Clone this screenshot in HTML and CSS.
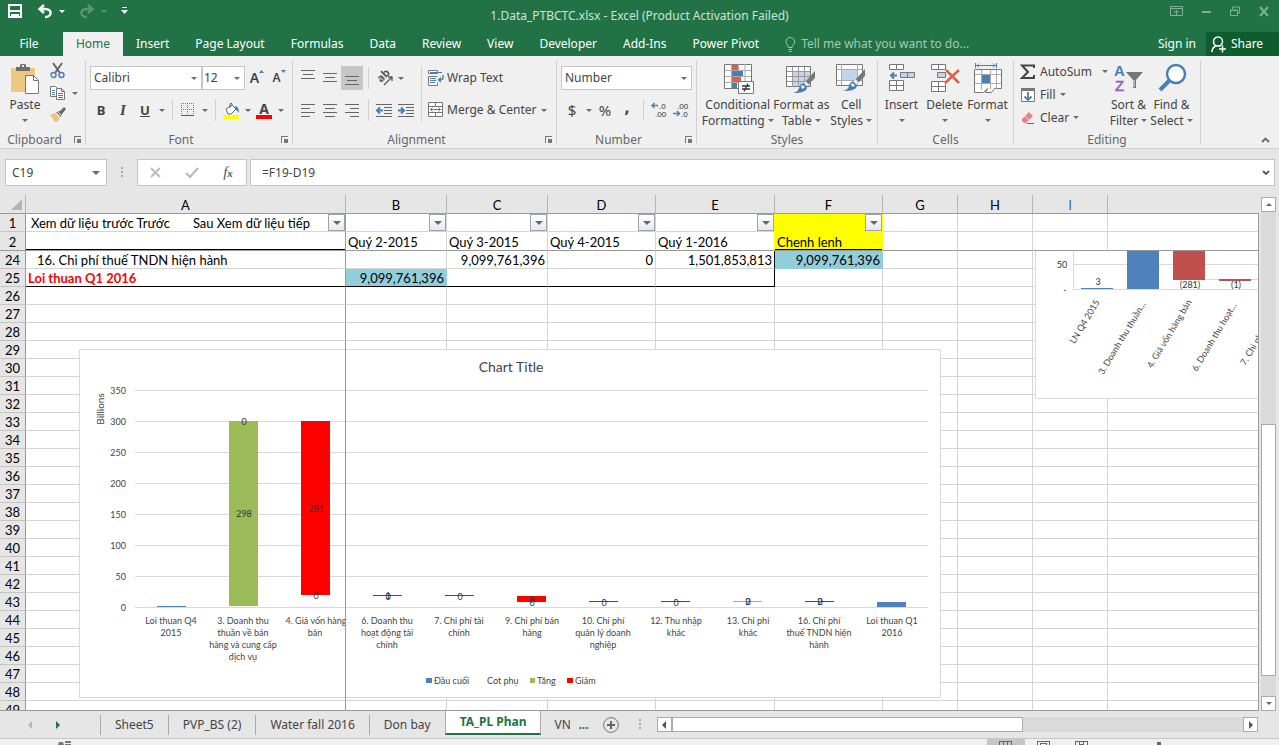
FILE: index.html
```html
<!DOCTYPE html>
<html lang="vi">
<head>
	<meta charset="utf-8">
	<title>1.Data_PTBCTC.xlsx - Excel</title>
	<link rel="stylesheet" href="styles.css">
</head>
<body>
	<header class="titlebar">
		<div class="quick">
			<button title="Save"><svg width="16" height="16" viewBox="0 0 16 16"><path d="M2 2h12v12H2z" fill="none" stroke="#fff" stroke-width="2"/><path d="M2 7h12v2H2zM4 11h8v4H9v-2H7v2H4z" fill="#fff"/></svg></button>
			<button title="Undo" class="undo"><svg width="16" height="14" viewBox="0 0 16 14"><path d="M7 1L2.500 5 7 9M2 5h6c8 0 7 8 0 8" fill="none" stroke="#fff" stroke-width="2.400"/></svg><i class="arr"></i></button>
			<button title="Redo" class="undo faded"><svg width="16" height="14" viewBox="0 0 16 14"><path d="M9 1l4.500 4L9 9M14 5H8C0 5 1 13 8 13" fill="none" stroke="#fff" stroke-width="2.400"/></svg><i class="arr"></i></button>
			<button title="Customize"><svg width="7" height="8" viewBox="0 0 7 8"><path d="M1 0h5v1H1zM0 3h7L3.500 7z" fill="#fff"/></svg></button>
		</div>
		<h1>1.Data_PTBCTC.xlsx - Excel (Product Activation Failed)</h1>
		<div class="winbtns">
			<button title="Ribbon options"><svg width="14" height="11" viewBox="0 0 14 11"><path d="M.5.5h12v9H.5zM1 2.500h12M6.500 9V4.500M4 6.500l2.500-2 2.500 2" fill="none" stroke="#7fb094"/></svg></button>
			<button title="Minimize"><svg width="10" height="10" viewBox="0 0 10 10"><path d="M0 5h9v2H0z" fill="#7fb094"/></svg></button>
			<button title="Restore"><svg width="11" height="11" viewBox="0 0 11 11"><path d="M2.500 3V1h7v6h-2M.5 4h7v5.500h-7zM.5 4.500h7" fill="none" stroke="#7fb094"/></svg></button>
			<button title="Close"><svg width="11" height="11" viewBox="0 0 11 11"><path d="M1 1l8 9M9 1l-8 9" stroke="#7fb094" stroke-width="2"/></svg></button>
		</div>
	</header>

	<nav class="tabs">
		<button class="file">File</button>
		<button class="active">Home</button>
		<button>Insert</button>
		<button>Page Layout</button>
		<button>Formulas</button>
		<button>Data</button>
		<button>Review</button>
		<button>View</button>
		<button>Developer</button>
		<button>Add-Ins</button>
		<button>Power Pivot</button>
		<button class="tell"><svg width="11" height="15" viewBox="0 0 11 15"><path d="M3.500 10.500C3.500 8 1 7.500 1 4.800a4.300 4.300 0 0 1 8.600 0C9.600 7.500 7 8 7 10.500zM3.500 12.500H7M4 14.500h2.500" fill="none" stroke="#a4c9b3"/></svg>Tell me what you want to do...</button>
		<button class="signin">Sign in</button>
		<button class="share"><svg width="16" height="17" viewBox="0 0 16 17"><circle cx="7" cy="5.500" r="4.500" fill="none" stroke="#fff" stroke-width="1.500"/><path d="M1 16c0-3 2-5.500 4.500-6.500M8.500 9.500l1 .8M8 13h7M11.500 9.500v7" fill="none" stroke="#fff" stroke-width="1.500"/></svg>Share</button>
	</nav>

	<section class="ribbon">
		<div class="group clipboard">
			<div class="body">
				<button class="big"><svg width="30" height="32" viewBox="0 0 30 32"><path d="M1 5h24v24H1z" fill="#ecc883"/><path d="M6 4h4V2l1-1h4l1 1v2h4v4H6z" fill="#6e6e6e"/><path d="M12 2h2v2h-2z" fill="#f0f0f0"/><path d="M15.500 12.500h8l5 5v13h-13z" fill="#fff" stroke="#777"/><path d="M23.500 12.500v5h5" fill="none" stroke="#777"/></svg><span>Paste</span><i class="arr"></i></button>
				<div class="stack">
					<button title="Cut"><svg width="16" height="16" viewBox="0 0 16 16"><path d="M3 0l7 10M12 0L5 10" stroke="#666" stroke-width="2"/><circle cx="3.500" cy="12" r="2.500" fill="none" stroke="#4a7fb5" stroke-width="1.400"/><circle cx="11.500" cy="12" r="2.500" fill="none" stroke="#4a7fb5" stroke-width="1.400"/></svg></button>
					<button title="Copy"><svg width="16" height="16" viewBox="0 0 16 16"><path d="M.5 1.500h5l3 3v7h-8z" fill="#fff" stroke="#777"/><path d="M2 5.500h3M2 7.500h3M2 9.500h3" stroke="#4a7fb5"/><path d="M6.500 3.500h5l3 3v8h-8z" fill="#fff" stroke="#777"/><path d="M11.500 3.500v3h3" fill="none" stroke="#777"/><path d="M8 8.500h5M8 10.500h5M8 12.500h5" stroke="#4a7fb5"/></svg><i class="arr"></i></button>
					<button title="Format Painter"><svg width="16" height="16" viewBox="0 0 16 16"><path d="M0 8l5-2 5 5-3 4H5z" fill="#ecc27e"/><path d="M6 5l5 5 1-3 4-5-2-2-4 4z" fill="#666"/><path d="M7 4l6 6" stroke="#f0f0f0"/></svg></button>
				</div>
			</div>
			<div class="label">Clipboard<i class="launch"></i></div>
		</div>

		<div class="group font">
			<div class="body rows">
				<div class="row">
					<span class="combo wide"><select aria-label="Font"><option>Calibri</option></select></span><span class="combo narrow"><select aria-label="Font size"><option>12</option></select></span>
					<button class="ib grow" title="Increase font size">A<svg width="5" height="4" viewBox="0 0 5 4"><path d="M0 3h5L2.500 0z" fill="#4a7fb5"/></svg></button>
					<button class="ib shrink" title="Decrease font size">A<svg width="5" height="4" viewBox="0 0 5 4"><path d="M0 0h5L2.500 3z" fill="#4a7fb5"/></svg></button>
				</div>
				<div class="row">
					<button class="ib bold">B</button>
					<button class="ib italic">I</button>
					<button class="ib under">U</button>
					<button class="drop" title="Underline"><i class="arr"></i></button>
					<i class="sep"></i>
					<button class="ib" title="Borders"><svg width="14" height="14" viewBox="0 0 14 14"><path d="M.5 0v13M12.500 0v13M0 .5h13M6.500 0v13M0 6.500h13" stroke="#777" stroke-dasharray="1 1"/><path d="M0 12.500h13" stroke="#555"/></svg></button>
					<button class="drop" title="Border styles"><i class="arr"></i></button>
					<i class="sep"></i>
					<button class="ib" title="Fill"><svg width="17" height="17" viewBox="0 0 17 17"><path d="M3 7l6-4 4 4-5 5H5z" fill="#fff" stroke="#666"/><path d="M7 6V2q1-2 2 0v2" fill="none" stroke="#666"/><path d="M12 4q4 0 4 7-2-3-3-3z" fill="#4a7fb5"/><path d="M0 13h16v4H0z" fill="#ff0"/></svg></button>
					<button class="drop" title="Fill colours"><i class="arr"></i></button>
					<button class="ib fontcolor" title="Font color">A</button>
					<button class="drop" title="Font colours"><i class="arr"></i></button>
				</div>
			</div>
			<div class="label">Font<i class="launch"></i></div>
		</div>

		<div class="group alignment">
			<div class="body">
				<div class="rows">
					<div class="row">
						<button class="ib" title="Top Align"><svg width="14" height="16" viewBox="0 0 14 16"><path d="M0 .5h14M2 4.500h10M0 8.500h14" stroke="#666"/></svg></button>
						<button class="ib" title="Middle Align"><svg width="14" height="14" viewBox="0 0 14 14"><path d="M0 2.500h14M2 6.500h10M0 10.500h14" stroke="#666"/></svg></button>
						<button class="ib on" title="Bottom Align"><svg width="14" height="14" viewBox="0 0 14 14"><path d="M0 5.500h14M2 9.500h10M0 13.500h14" stroke="#666"/></svg></button>
						<i class="sep"></i>
						<button class="ib" title="Orientation"><svg width="17" height="16" viewBox="0 0 17 16"><text x="0" y="0" transform="translate(5 13) rotate(-45)" font-size="11" font-weight="bold" fill="#555">ab</text><path d="M8 15l8-8M12 7h4v4" fill="none" stroke="#555" stroke-width="1.300"/></svg></button>
						<button class="drop" title="Orientation options"><i class="arr"></i></button>
					</div>
					<div class="row">
						<button class="ib" title="Left"><svg width="14" height="14" viewBox="0 0 14 14"><path d="M0 1.500h14M0 5.500h9M0 9.500h14M0 13.500h9" stroke="#666"/></svg></button>
						<button class="ib" title="Center"><svg width="14" height="14" viewBox="0 0 14 14"><path d="M0 1.500h14M2 5.500h10M0 9.500h14M2 13.500h10" stroke="#666"/></svg></button>
						<button class="ib" title="Right"><svg width="14" height="14" viewBox="0 0 14 14"><path d="M0 1.500h14M5 5.500h9M0 9.500h14M5 13.500h9" stroke="#666"/></svg></button>
						<i class="sep"></i>
						<button class="ib" title="Decrease Indent"><svg width="16" height="13" viewBox="0 0 16 13"><path d="M0 .5h16M8 3.500h8M8 6.500h8M8 9.500h8M0 12.500h16" stroke="#666"/><path d="M7 6.500H1M4 3.500l-3 3 3 3" fill="none" stroke="#4a7fb5" stroke-width="2"/></svg></button>
						<button class="ib" title="Increase Indent"><svg width="16" height="13" viewBox="0 0 16 13"><path d="M0 .5h16M8 3.500h8M8 6.500h8M8 9.500h8M0 12.500h16" stroke="#666"/><path d="M0 6.500h6M3 3.500l3 3-3 3" fill="none" stroke="#4a7fb5" stroke-width="2"/></svg></button>
					</div>
				</div>
				<i class="sep tall"></i>
				<div class="rows">
					<button class="tb"><svg width="16" height="16" viewBox="0 0 16 16"><path d="M.5.5h9v3h-9zM9.500 6.500h-9v9h9v-3" fill="#fff" stroke="#777"/><path d="M2 2.500h12M2 8.500h6M2 10.500h6M2 12.500h5" stroke="#4a7fb5"/><path d="M15 5v3q0 2-4 2M13 7.500l-2.500 2.500 2.500 2" fill="none" stroke="#4a7fb5" stroke-width="1.400"/></svg>Wrap Text</button>
					<button class="tb"><svg width="16" height="16" viewBox="0 0 16 16"><path d="M.5.5h14v14H.5zM0 4.500h15M0 10.500h15M7.500 0v4M7.500 11v4" fill="#fff" stroke="#777"/><path d="M2 7.500h11M4.500 5.500l-2 2 2 2M10.500 5.500l2 2-2 2" fill="none" stroke="#4a7fb5"/></svg>Merge &amp; Center<i class="arr far"></i></button>
				</div>
			</div>
			<div class="label">Alignment<i class="launch"></i></div>
		</div>

		<div class="group number">
			<div class="body rows">
				<div class="row"><span class="combo full"><select aria-label="Number format"><option>Number</option></select></span></div>
				<div class="row">
					<button class="ib sym">$</button>
					<button class="drop" title="Currency"><i class="arr"></i></button>
					<button class="ib sym">%</button>
					<button class="ib sym heavy">,</button>
					<i class="sep"></i>
					<button class="ib" title="Increase Decimal"><svg class="dec" width="16" height="16" viewBox="0 0 16 16"><path d="M7 3.500H1M3.500 1L1 3.500 3.500 6" fill="none" stroke="#4a7fb5" stroke-width="1.400"/><text x="8" y="7">.0</text><text x="4" y="15">.00</text></svg></button>
					<button class="ib" title="Decrease Decimal"><svg class="dec" width="16" height="16" viewBox="0 0 16 16"><path d="M0 11.500h6M4 9l2.500 2.500L4 14" fill="none" stroke="#4a7fb5" stroke-width="1.400"/><text x="4" y="7">.00</text><text x="8" y="15">.0</text></svg></button>
				</div>
			</div>
			<div class="label">Number<i class="launch"></i></div>
		</div>

		<div class="group styles">
			<div class="body">
				<button class="big w1"><svg width="32" height="32" viewBox="0 0 32 32"><path d="M2.500 1.500h27v24h-27z" fill="#fff" stroke="#777"/><path d="M9.500 1v24M16.500 1v24M23 1v24M3 7.500h26M3 13.500h26M3 19.500h26" stroke="#aaa"/><path d="M10 2h6v5h-6zM10 14h9v5h-9z" fill="#dd6144"/><path d="M10 8h11v5H10zM10 20h5v5h-5z" fill="#4a7fb5"/><path d="M16.500 18.500h15v12h-15z" fill="#fff" stroke="#777"/><path d="M20 23h8M20 26h8M26 20.500l-4 8" stroke="#333" stroke-width="1.300"/></svg><span>Conditional<br>Formatting<i class="arr"></i></span></button>
				<button class="big w2"><svg width="32" height="32" viewBox="0 0 32 32"><path d="M1.500 3.500h24v20h-24z" fill="#fff" stroke="#777"/><path d="M8 9h17v14H8z" fill="#c3d5ea"/><path d="M7.500 4v20M13.500 4v20M19.500 4v20M2 8.500h23M2 13.500h23M2 18.500h23" stroke="#999"/><path d="M30 8v7l-7 7-3-3z" fill="#777"/><path d="M20 19l3 3" stroke="#f0f0f0" stroke-width="2"/><path d="M18 20l4 4q0 6-14 6 5-1 6-5 1-4 4-5z" fill="#4a7fb5"/><path d="M17 22l3 2-2 2-2-2z" fill="#fff"/></svg><span>Format as<br>Table<i class="arr"></i></span></button>
				<button class="big w3"><svg width="32" height="32" viewBox="0 0 32 32"><path d="M1.500 1.500h26v21h-26z" fill="#fff" stroke="#777"/><path d="M6.500 1v21M22.500 1v21M2 6.500h25M2 17.500h25" stroke="#aaa"/><path d="M7 7h15v10H7z" fill="#c3d5ea"/><path d="M30 6v7l-7 7-3-3z" fill="#777"/><path d="M20 17l3 3" stroke="#f0f0f0" stroke-width="2"/><path d="M18 18l4 4q0 6-14 6 5-1 6-5 1-4 4-5z" fill="#4a7fb5"/><path d="M17 20l3 2-2 2-2-2z" fill="#fff"/></svg><span>Cell<br>Styles<i class="arr"></i></span></button>
			</div>
			<div class="label">Styles</div>
		</div>

		<div class="group cells">
			<div class="body">
				<button class="big"><svg width="32" height="32" viewBox="0 0 32 32"><path d="M3.500 1.500h14v5h-14zM10.500 1v6M3.500 17.500h14v10h-14zM10.500 17v11M3 22.500h15" fill="#fff" stroke="#777"/><path d="M14.500 9.500h14v5h-14z" fill="#c3d5ea" stroke="#777"/><path d="M21.500 9v6" stroke="#777"/><path d="M11 12.500H5M8 9.500l-3 3 3 3" fill="none" stroke="#4a7fb5" stroke-width="2"/></svg><span>Insert</span><i class="arr"></i></button>
				<button class="big"><svg width="32" height="32" viewBox="0 0 32 32"><path d="M2.500 1.500h14v5h-14zM9.500 1v6M2.500 18.500h14v10h-14zM9.500 18v11M2 23.500h15" fill="#fff" stroke="#777"/><path d="M8.500 9.500h8v5h-8z" fill="#c3d5ea" stroke="#777"/><path d="M17 7l13 13M30 7L16 20" stroke="#dd6144" stroke-width="2.500"/></svg><span>Delete</span><i class="arr"></i></button>
				<button class="big"><svg width="32" height="32" viewBox="0 0 32 32"><path d="M2.500 6.500h27v19h-7l-3 4h-6l2-4-4 4h-9z" fill="#fff" stroke="#777"/><path d="M9.500 7v20M18.500 7v19M24.500 7v19M3 11.500h26M3 20.500h26" stroke="#aaa"/><path d="M10 12h8v8h-8z" fill="#4a7fb5"/><path d="M3.500 0v5M24.500 0v5M4 2.500h20M7 .5l-2 2 2 2M21 .5l2 2-2 2" fill="none" stroke="#4a7fb5"/></svg><span>Format</span><i class="arr"></i></button>
			</div>
			<div class="label">Cells</div>
		</div>

		<div class="group editing">
			<div class="body">
				<div class="list">
					<button class="tb"><svg width="16" height="16" viewBox="0 0 16 16"><path d="M14 4V1.500H2L8 8l-6 6h12v-3" fill="none" stroke="#444" stroke-width="2"/></svg>AutoSum<i class="arr far"></i></button>
					<button class="tb"><svg width="16" height="16" viewBox="0 0 16 16"><path d="M1.500 1.500h13v13h-13z" fill="#fff" stroke="#777"/><path d="M1 1h14v3H1z" fill="#777"/><path d="M8 5v8M4.500 9.500L8 13l3.500-3.500" fill="none" stroke="#4a7fb5" stroke-width="1.800"/></svg>Fill<i class="arr"></i></button>
					<button class="tb"><svg width="16" height="16" viewBox="0 0 16 16"><path d="M2 9l7-7 4 4-7 7H4l-2-2z" fill="#e8808f"/><path d="M5 6l4 4" stroke="#f0f0f0"/><path d="M7 13.500h7" stroke="#666"/></svg>Clear<i class="arr"></i></button>
				</div>
				<button class="big"><svg class="az" width="32" height="32" viewBox="0 0 32 32"><text x="1" y="13" font-weight="bold" fill="#4a7fb5">A</text><text x="2" y="28" fill="#9660b8" stroke="#9660b8" stroke-width=".6">Z</text><path d="M13 9h17l-7 8v8h-3v-8z" fill="#777"/><path d="M21 17v7" stroke="#f0f0f0"/></svg><span>Sort &amp;<br>Filter<i class="arr"></i></span></button>
				<button class="big"><svg width="32" height="32" viewBox="0 0 32 32"><circle cx="20" cy="11" r="9" fill="#fff" stroke="#4a7fb5" stroke-width="2.500"/><path d="M13 18L4 27" stroke="#4a7fb5" stroke-width="4"/></svg><span>Find &amp;<br>Select<i class="arr"></i></span></button>
			</div>
			<div class="label">Editing</div>
		</div>
		<button class="collapse" title="Collapse"><svg width="9" height="6" viewBox="0 0 9 6"><path d="M1 5l3.500-3.500L8 5" fill="none" stroke="#666" stroke-width="1.800"/></svg></button>
	</section>

	<section class="formulabar">
		<div class="namebox"><input type="text" value="C19" aria-label="Name box"><i class="arr"></i></div>
		<i class="dots"></i>
		<div class="fxbtns">
			<button title="Cancel"><svg width="12" height="12" viewBox="0 0 12 12"><path d="M1 1l9 9M10 1l-9 9" stroke="#bbb" stroke-width="1.800"/></svg></button>
			<button title="Enter"><svg width="14" height="12" viewBox="0 0 14 12"><path d="M1 6l4 4 8-9" fill="none" stroke="#bbb" stroke-width="2.200"/></svg></button>
			<button class="fx"><i>f</i><small>x</small></button>
		</div>
		<div class="formula"><input type="text" value="=F19-D19" aria-label="Formula"><svg width="8" height="6" viewBox="0 0 8 6"><path d="M1 1l3 3 3-3" fill="none" stroke="#555" stroke-width="1.800"/></svg></div>
	</section>

	<main class="sheet">
		<div class="grid">
			<table>
				<colgroup><col class="c0"><col class="ca"><col class="cb"><col class="cb"><col class="cd"><col class="ce"><col class="cd"><col class="cg"><col class="cg"><col class="cg"><col></colgroup>
				<thead>
					<tr><th class="corner"><svg width="11" height="11" viewBox="0 0 11 11"><path d="M11 0v11H0z" fill="#b4b4b4"/></svg></th><th>A</th><th>B</th><th>C</th><th>D</th><th>E</th><th>F</th><th>G</th><th>H</th><th class="blue">I</th><th></th></tr>
				</thead>
				<tbody id="rows">
					<tr><th>1</th><td class="nav"><span>Xem dữ liệu trước Trước</span><span>Sau Xem dữ liệu tiếp</span><button class="filter" title="Filter"></button></td><td><button class="filter" title="Filter"></button></td><td><button class="filter" title="Filter"></button></td><td><button class="filter" title="Filter"></button></td><td class="edge"><button class="filter" title="Filter"></button></td><td class="yellow"><button class="filter" title="Filter"></button></td><td></td><td></td><td></td><td></td></tr>
					<tr class="frozen"><th>2</th><td class="line"></td><td>Quý 2-2015</td><td>Quý 3-2015</td><td>Quý 4-2015</td><td class="edge">Quý 1-2016</td><td class="yellow line">Chenh lenh</td><td></td><td></td><td></td><td></td></tr>
					<tr><th>24</th><td class="indent">16. Chi phí thuế TNDN hiện hành</td><td></td><td class="num">9,099,761,396</td><td class="num">0</td><td class="num box">1,501,853,813</td><td class="num teal">9,099,761,396</td><td></td><td></td><td></td><td></td></tr>
					<tr class="total"><th>25</th><td class="red">Loi thuan Q1 2016</td><td class="num teal">9,099,761,396</td><td></td><td></td><td class="box"></td><td></td><td></td><td></td><td></td><td></td></tr>
				</tbody>
			</table>

			<svg class="chart main-chart" width="862" height="349" viewBox="0 0 862 349">
				<rect x=".5" y=".5" width="861" height="348" fill="#fff" stroke="#d9d9d9"/>
				<text class="title" x="432" y="23">Chart Title</text>
				<path d="M56 41.500h793M56 72.500h793M56 103.500h793M56 134.500h793M56 165.500h793M56 196.500h793M56 227.500h793M56 258.500h793" stroke="#d9d9d9"/>
				<g class="axis">
					<text x="47" y="45">350</text><text x="47" y="76">300</text><text x="47" y="107">250</text><text x="47" y="138">200</text><text x="47" y="169">150</text><text x="47" y="200">100</text><text x="47" y="231">50</text><text x="47" y="262">0</text>
				</g>
				<text class="unit" transform="translate(25 60) rotate(-90)">Billions</text>
				<g fill="#4f81bd"><rect x="78" y="257" width="29" height="1"/><rect x="798" y="253" width="29" height="5"/></g>
				<g fill="#9bbb59"><rect x="150" y="72" width="29" height="185"/><rect x="654" y="252" width="29" height="1"/></g>
				<g fill="#f00"><rect x="222" y="72" width="29" height="174"/><rect x="294" y="246" width="29" height="1"/><rect x="366" y="246" width="29" height="1"/><rect x="438" y="247" width="29" height="6"/><rect x="510" y="252" width="29" height="1"/><rect x="582" y="252" width="29" height="1"/><rect x="726" y="252" width="29" height="1"/></g>
				<g class="values">
					<text x="165" y="76">0</text><text x="165" y="168">298</text><text x="237" y="163">281</text><text x="237" y="250">0</text>
					<text x="309" y="251">0</text><text x="309" y="250">1</text><text x="381" y="251">0</text><text x="453" y="257">0</text><text x="453" y="254">9</text><text x="525" y="257">0</text><text x="597" y="257">0</text><text x="669" y="256">0</text><text x="669" y="256">2</text><text x="741" y="256">0</text><text x="741" y="256">2</text>
				</g>
				<g class="cats">
					<text x="92" y="275">Loi thuan Q4<tspan x="92" dy="12">2015</tspan></text>
					<text x="164" y="275">3. Doanh thu<tspan x="164" dy="12">thuần về bán</tspan><tspan x="164" dy="12">hàng và cung cấp</tspan><tspan x="164" dy="12">dịch vụ</tspan></text>
					<text x="237" y="275">4. Giá vốn hàng<tspan x="236" dy="12">bán</tspan></text>
					<text x="308" y="275">6. Doanh thu<tspan x="308" dy="12">hoạt động tài</tspan><tspan x="308" dy="12">chính</tspan></text>
					<text x="380" y="275">7. Chi phí tài<tspan x="380" dy="12">chính</tspan></text>
					<text x="453" y="275">9. Chi phí bán<tspan x="453" dy="12">hàng</tspan></text>
					<text x="524" y="275">10. Chi phí<tspan x="524" dy="12">quản lý doanh</tspan><tspan x="524" dy="12">nghiệp</tspan></text>
					<text x="597" y="275">12. Thu nhập<tspan x="597" dy="12">khác</tspan></text>
					<text x="669" y="275">13. Chi phí<tspan x="669" dy="12">khác</tspan></text>
					<text x="740" y="275">16. Chi phí<tspan x="740" dy="12">thuế TNDN hiện</tspan><tspan x="740" dy="12">hành</tspan></text>
					<text x="813" y="275">Loi thuan Q1<tspan x="813" dy="12">2016</tspan></text>
				</g>
				<path d="M347 329h6v5h-6z" fill="#4f81bd"/><path d="M451 329h5v5h-5z" fill="#9bbb59"/><path d="M488 329h6v5h-6z" fill="#f00"/>
				<g class="legend"><text x="355" y="335">Đầu cuối</text><text x="408" y="335">Cot phụ</text><text x="458" y="335">Tăng</text><text x="496" y="335">Giảm</text></g>
				<path d="M266.500 0v349" stroke="#999"/>
			</svg>

			<svg class="chart side-chart" width="223" height="148" viewBox="0 0 223 148">
				<path d="M0 0h223v148H0z" fill="#fff"/>
				<path d="M.5 0v147.500H223M38 13.500h185M38.500 0v38.500M38 38.500h185M170 28.500h14M215 28.500h8" fill="none" stroke="#d9d9d9"/>
				<path d="M46 37h32v1H46zM92 0h32v38H92z" fill="#4f81bd"/>
				<path d="M138 0h32v29h-32zM184 28h32v2h-32z" fill="#c0504d"/>
				<path d="M145 30h20v8h-20zM196 30h12v8h-12z" fill="#fff"/>
				<g class="values"><text x="27" y="17">50</text><text x="30" y="42">-</text><text x="63" y="34">3</text><text x="155" y="37">(281)</text><text x="201" y="37">(1)</text></g>
				<g class="slant">
					<text transform="translate(65 51) rotate(-59)">LN Q4 2015</text>
					<text transform="translate(111 53) rotate(-59)">3. Doanh thu thuần...</text>
					<text transform="translate(157 51) rotate(-59)">4. Giá vốn hàng bán</text>
					<text transform="translate(202 54) rotate(-59)">6. Doanh thu hoạt...</text>
					<text transform="translate(248 52) rotate(-59)">7. Chi phí tài chính</text>
				</g>
			</svg>
		</div>
		<div class="vscroll">
			<button class="sbtn" title="Up"><i class="arr up"></i></button>
			<div class="track"><div class="before"></div><div class="thumb"></div><div class="after"></div></div>
			<button class="sbtn" title="Down"><i class="arr"></i></button>
		</div>
	</main>

	<footer class="sheettabs">
		<div class="arrows"><button title="Previous"><i class="arr left pale"></i></button><button title="Next"><i class="arr right green"></i></button></div>
		<button class="tab">Sheet5</button><button class="tab">PVP_BS (2)</button><button class="tab">Water fall 2016</button><button class="tab">Don bay</button><button class="tab current">TA_PL Phan</button><button class="tab cut">VN</button>
		<button class="more">...</button>
		<button class="add" title="New sheet"><svg width="16" height="16" viewBox="0 0 16 16"><circle cx="8" cy="8" r="7.400" fill="none" stroke="#777"/><path d="M8 4v8M4 8h8" stroke="#666" stroke-width="2"/></svg></button>
		<i class="dots"></i>
		<div class="hscroll">
			<button class="sbtn" title="Left"><i class="arr left"></i></button>
			<div class="thumb"></div>
			<div class="rest"></div>
			<button class="sbtn" title="Right"><i class="arr right"></i></button>
		</div>
	</footer>
	<div class="status">
		<svg width="14" height="4" viewBox="0 0 14 4"><path d="M1 1h4l1 3H0zM7 0h6v2H7zM7 3h6v1H7z" fill="#777"/></svg>
		<div class="views">
			<span class="on"><svg width="14" height="4" viewBox="0 0 14 4"><path d="M0 .5h13M.5 0v4M4.500 0v4M8.500 0v4M12.500 0v4" stroke="#666"/></svg></span>
			<span><svg width="14" height="4" viewBox="0 0 14 4"><path d="M0 .5h13M.5 0v4M12.500 0v4M3 2.500h7M3.500 2v2M9.500 2v2" stroke="#666"/></svg></span>
			<span><svg width="14" height="4" viewBox="0 0 14 4"><path d="M0 .5h13M.5 0v4M4.500 0v3M8.500 0v3M12.500 0v4M4 3.500h5" stroke="#666"/></svg></span>
			<i class="knob"></i>
		</div>
	</div>
	<script src="script.js"></script>
</body>
</html>
```

FILE: script.js
```js
// empty rows below the data
var rows = document.getElementById("rows");
for(var i = 26; i < 50; i++){
	var tr = document.createElement("tr");
	var th = document.createElement("th");
	th.textContent = i;
	tr.appendChild(th);
	for(var j = 0; j < 10; j++){
		tr.appendChild(document.createElement("td"));
	}
	rows.appendChild(tr);
}
```

FILE: styles.css
```css
*{margin:0; padding:0; box-sizing:border-box;}
body{
	display:flex;
	flex-direction:column;
	height:100vh;
	overflow:hidden;
	background:#e6e6e6;
	color:#444;
	font-family:"Noto Sans", "Open Sans", sans-serif;
	font-size:12px;
	line-height:16px;
}
button, input, select{
	border:0;
	background:none;
	color:inherit;
	font:inherit;
}
button{
	display:flex;
	align-items:center;
	justify-content:center;
}
svg{display:block; flex:none; overflow:visible;}

/* small triangles */
.arr{
	flex:none;
	width:0;
	height:0;
	border:3px solid transparent;
	border-top-color:#6b6b6b;
	border-bottom-width:0;
}
.arr.up{border-width:0 3px 3px; border-bottom-color:#6b6b6b;}
.arr.left{border-width:4px 4px 4px 0; border-color:transparent #555;}
.arr.right{border-width:4px 0 4px 4px; border-color:transparent #555;}
.arr.pale{border-color:transparent #b5b5b5;}
.arr.green{border-color:transparent #217346;}

/* title bar */
.titlebar{
	display:grid;
	flex:none;
	grid-template-columns:1fr auto 1fr;
	height:32px;
	background:#217346;
	color:#cfe2d7;
}
.titlebar h1{
	padding-top:8px;
	font-size:12px;
	font-weight:normal;
}
.quick{
	display:flex;
	align-items:center;
	gap:14px;
	height:22px;
	padding-left:7px;
}
.undo{gap:6px;}
.quick .arr{border-top-color:#fff;}
.faded{opacity:.25;}
.winbtns{
	display:flex;
	justify-content:flex-end;
	gap:18px;
	height:22px;
	padding-right:9px;
}

/* ribbon tabs */
.tabs{
	display:flex;
	flex:none;
	height:24px;
	background:#217346;
	color:#fff;
	white-space:nowrap;
}
.tabs button{padding:0 13px;}
.tabs .file{width:58px; margin-right:5px;}
.tabs .active{
	width:60px;
	background:#f0f0f0;
	color:#217346;
}
.tabs .tell{gap:5px; color:#a4c9b3;}
.tabs .signin{margin-left:auto; padding:0 10px;}
.tabs .share{
	gap:4px;
	width:73px;
	padding:0 18px 0 7px;
	background:#0f5c2f;
}

/* ribbon */
.ribbon{
	display:flex;
	flex:none;
	height:93px;
	padding-top:4px;
	background:#f0f0f0;
	border-bottom:1px solid #d2d2d2;
}
.group{
	display:flex;
	flex:none;
	flex-direction:column;
	justify-content:space-between;
	height:84px;
	border-right:1px solid #d0d0d0;
}
.clipboard{width:86px;}
.font{width:207px;}
.alignment{width:264px;}
.number{width:140px;}
.styles{width:181px;}
.cells{width:136px;}
.editing{width:187px;}
.body{display:flex; height:68px;}
.label{
	display:flex;
	align-items:flex-end;
	justify-content:center;
	position:relative;
	margin-bottom:-4px;
	color:#666;
}
.clipboard .label, .font .label, .alignment .label, .number .label{padding-right:16px;}
.launch{
	position:absolute;
	right:4px;
	bottom:5px;
	width:7px;
	height:7px;
	border-left:1px solid #777;
	border-top:1px solid #777;
	background:linear-gradient(#777, #777) 100% 100% / 4px 4px no-repeat;
}
.big{
	flex-direction:column;
	justify-content:flex-start;
	width:43px;
	padding-top:3px;
	white-space:nowrap;
	line-height:16px;
}
.big span{margin-top:2px;}
.big > .arr{margin-top:6px;}
.big span .arr{
	display:inline-block;
	margin-left:3px;
	vertical-align:3px;
}
.clipboard .big{width:50px;}
.w1{width:80px;}
.w2{width:48px;}
.w3{width:52px;}
.styles .body{padding-left:1px;}
.cells .body{padding-left:2px;}
.stack button{gap:6px; height:22px; justify-content:flex-start;}
.rows{
	display:flex;
	flex-direction:column;
	gap:8px;
	padding-top:6px;
}
.row{display:flex; flex:none; align-items:center; height:24px;}
.font .rows, .number .rows, .alignment .rows{padding-left:4px;}
.ib{width:22px; height:24px;}
.on{background:#c6c6c6;}
.drop{width:11px; height:24px;}
.sep{
	flex:none;
	width:1px;
	height:22px;
	margin:0 4px 0 5px;
	background:#d0d0d0;
}
.tall{height:56px; margin:6px 2px 0 4px;}
.combo{
	position:relative;
	height:24px;
	border:1px solid #c6c6c6;
	background:#fff;
}
.combo select{
	width:100%;
	height:22px;
	padding-left:3px;
	appearance:none;
}
.combo::after{
	content:"";
	position:absolute;
	right:4px;
	top:10px;
	border:3px solid transparent;
	border-top-color:#6b6b6b;
	border-bottom-width:0;
}
.wide{width:112px;}
.narrow{width:43px;}
.full{width:131px;}
.narrow select{padding-left:1px;}
.grow, .shrink{align-items:flex-start; padding-top:4px; font-weight:600;}
.grow{margin-left:1px; font-size:14px;}
.bold, .italic, .under{font-size:13px; font-weight:bold;}
.italic{font-family:"Liberation Serif", serif; font-style:italic; font-size:15px;}
.under{text-decoration:underline;}
.fontcolor{
	height:18px;
	padding-bottom:3px;
	background:linear-gradient(#f00, #f00) 50% 100% / 16px 4px no-repeat;
	font-size:14px;
	font-weight:bold;
}
.sym{font-size:15px;}
.heavy{padding-bottom:8px; font-size:18px; font-weight:bold;}
.dec{
	font-family:"Liberation Sans", sans-serif;
	font-size:8px;
	fill:#333;
}
.az{font-family:"Liberation Sans", sans-serif; font-size:15px;}
.tb{
	flex:none;
	justify-content:flex-start;
	gap:4px;
	height:24px;
	white-space:nowrap;
}
.tb .far{margin-left:6px;}
.alignment .tb{gap:3px;}
.alignment .far{margin-left:1px;}
.list{width:93px; padding-left:6px;}
.list .tb{height:23px;}
.collapse{
	align-self:flex-end;
	margin:0 9px 5px auto;
}

/* formula bar */
.formulabar{
	display:flex;
	flex:none;
	gap:3px;
	height:46px;
	padding:10px 4px 9px 5px;
}
.namebox, .fxbtns, .formula{
	display:flex;
	align-items:center;
	border:1px solid #c6c6c6;
	background:#fff;
}
.namebox{width:102px; padding:0 6px;}
.namebox input, .formula input{flex:1; min-width:0;}
.namebox .arr{border-width:4px 4px 0;}
.dots{
	flex:none;
	align-self:center;
	width:2px;
	height:11px;
	margin:0 11px;
	background:repeating-linear-gradient(#aaa 0 2px, transparent 2px 4px);
}
.fxbtns{width:110px;}
.fxbtns button{flex:1;}
.fx{
	align-items:baseline;
	color:#555;
	font-family:"Liberation Serif", serif;
	font-size:15px;
}
.fx small{font-size:11px; font-weight:bold; font-style:italic;}
.formula{flex:1; padding:0 4px 0 11px;}

/* grid */
.sheet{display:flex; flex:1; min-height:0;}
.grid{
	position:relative;
	flex:1;
	overflow:hidden;
	border-bottom:1px solid #999;
}
table{
	width:100%;
	table-layout:fixed;
	border-spacing:0;
	color:#000;
	font-family:Lato, "Noto Sans", sans-serif;
	font-size:13px;
	line-height:16px;
}
.c0{width:26px;}
.ca{width:320px;}
.cb{width:101px;}
.cd{width:108px;}
.ce{width:119px;}
.cg{width:75px;}
th{
	height:18px;
	padding-top:1px;
	border-right:1px solid #999;
	border-bottom:1px solid #c4c4c4;
	background:#e6e6e6;
	font-weight:normal;
}
thead th{height:19px; border-right-color:#b5b5b5; border-bottom-color:#999;}
thead th:last-child{border-right:0;}
.corner svg{margin-left:11px;}
.blue{color:#2a6fb5;}
td{
	position:relative;
	height:18px;
	padding:1px 2px 0;
	border-right:1px solid #d4d4d4;
	border-bottom:1px solid #d4d4d4;
	background:#fff;
	white-space:nowrap;
}
td:nth-child(2){border-right-color:#999;}
td:last-child{border-right:0;}
.frozen td, .frozen th{height:19px; border-bottom-color:#999;}
.nav span{margin:0 20px 0 3px;}
.filter{
	position:absolute;
	right:0;
	top:0;
	width:17px;
	height:17px;
	border:1px solid #9aa3ae;
	background:linear-gradient(#fff, #e6e9ee);
}
.filter::after{
	content:"";
	border:4px solid transparent;
	border-top-color:#666;
	border-bottom-width:0;
}
.yellow{background:#ff0; border-color:#ff0;}
.edge{border-right-color:#ff0;}
.line{box-shadow:inset 0 -1px #000;}
.indent{padding-left:11px;}
.num{text-align:right;}
.teal{background:#92cddc; border-color:#92cddc;}
.box{border-right-color:#000;}
.total td:nth-child(-n+6){border-bottom-color:#000;}
.red{color:#f00; font-weight:bold;}

/* charts float over the cells */
.chart{
	position:absolute;
	overflow:hidden;
	font-family:Lato, "Noto Sans", sans-serif;
	font-size:9px;
	fill:#444;
}
.main-chart{left:79px; top:154px;}
.side-chart{left:1035px; top:56px;}
.title{font-size:14px; text-anchor:middle;}
.axis, .slant{text-anchor:end;}
.unit{font-size:10px; text-anchor:middle;}
.values, .cats{text-anchor:middle;}
.values{fill:#333;}

/* scroll bars */
.vscroll{
	display:flex;
	flex:none;
	flex-direction:column;
	width:21px;
	padding:2px 2px 0 3px;
	background:linear-gradient(#999, #999) 0 18px / 1px 100% no-repeat;
}
.sbtn{
	flex:none;
	width:15px;
	height:15px;
	border:1px solid #ababab;
	background:#fff;
}
.track{
	display:flex;
	flex:1;
	flex-direction:column;
	width:15px;
	background:#dadada;
}
.thumb{border:1px solid #ababab; background:#fff;}
.track .before{flex:212;}
.track .thumb{flex:251;}
.track .after{flex:20;}

/* sheet tabs */
.sheettabs{
	display:flex;
	flex:none;
	align-items:center;
	height:27px;
}
.arrows{
	display:flex;
	justify-content:center;
	gap:24px;
	width:100px;
	padding-right:12px;
}
.tab{
	height:20px;
	padding:0 14px;
	border-left:1px solid #ababab;
	white-space:nowrap;
}
.current{
	align-self:flex-start;
	height:24px;
	border-right:1px solid #ababab;
	border-bottom:2px solid #217346;
	background:#fff;
	color:#217346;
	font-weight:bold;
}
.cut{
	width:29px;
	padding:0 0 0 13px;
	border:0;
	justify-content:flex-start;
	overflow:hidden;
}
.more{
	margin:0 14px 0 8px;
	color:#217346;
	font-weight:bold;
}
.sheettabs .dots{margin:0 16px 0 20px;}
.hscroll{
	display:flex;
	flex:1;
	margin-right:21px;
	background:#dadada;
}
.hscroll .thumb{flex:349;}
.hscroll .rest{flex:220;}

.status{
	display:flex;
	flex:none;
	align-items:flex-end;
	justify-content:space-between;
	height:7px;
	padding:0 118px 0 58px;
	border-top:1px solid #c6c6c6;
	background:#f0f0f0;
	overflow:hidden;
}
.views{display:flex; align-items:flex-end;}
.views span{
	display:flex;
	align-items:flex-end;
	justify-content:center;
	width:38px;
	height:6px;
}
.knob{width:4px; height:3px; margin-left:56px; background:#666;}
```
